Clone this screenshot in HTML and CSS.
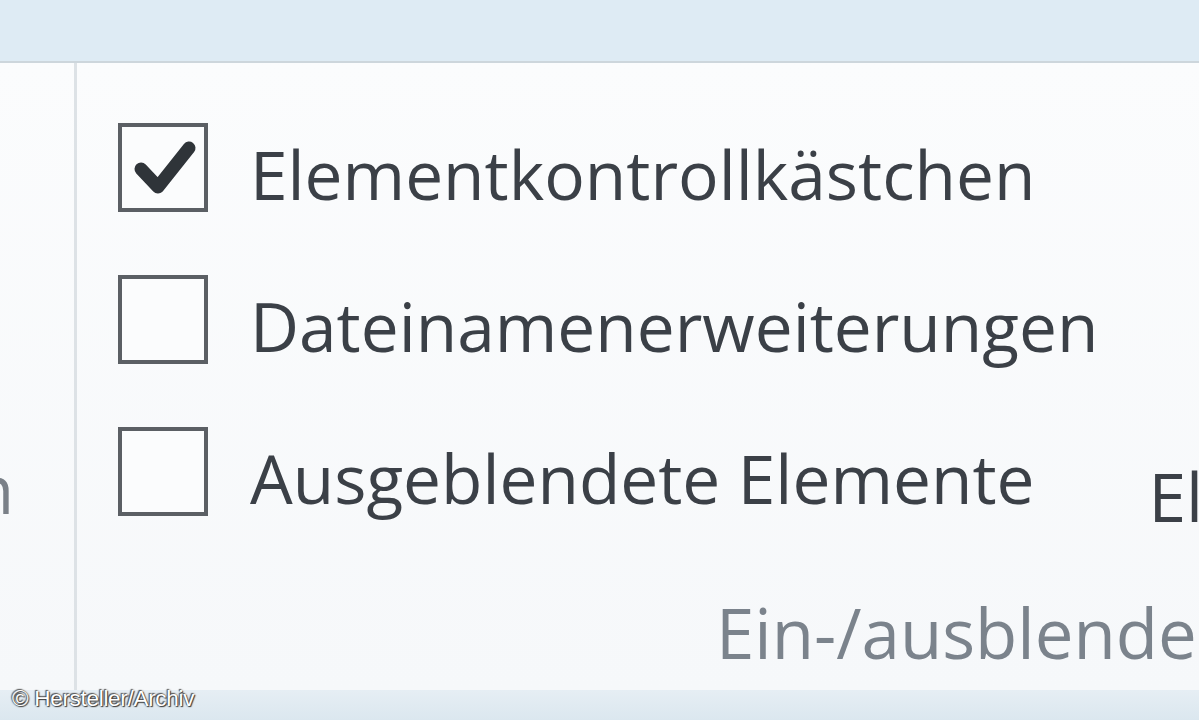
FILE: index.html
```html
<!DOCTYPE html>
<html lang="de">
<head>
    <meta charset="UTF-8">
    <title>Ansicht - Ein-/ausblenden</title>
    <link rel="stylesheet" href="styles.css">
</head>
<body>

    <div class="titlebar"></div>

    <div class="ribbon">
        <!-- vorherige Gruppe (abgeschnitten) -->
        <div class="group-prev">
            <span class="prev-item">Alle Spalten an Größe anpassen</span>
        </div>

        <div class="group-show">
            <div class="group-body">
                <ul class="check-list">
                    <li class="check-row">
                        <span class="checkbox">
                            <svg viewBox="0 0 82 81" width="82" height="81">
                                <path d="M19 42 L36 60 L67 21" fill="none" stroke="#2f3439" stroke-width="13" stroke-linecap="round" stroke-linejoin="round"/>
                            </svg>
                        </span>
                        <span class="check-label">Elementkontrollkästchen</span>
                    </li>
                    <li class="check-row">
                        <span class="checkbox"></span>
                        <span class="check-label">Dateinamenerweiterungen</span>
                    </li>
                    <li class="check-row">
                        <span class="checkbox"></span>
                        <span class="check-label">Ausgeblendete Elemente</span>
                    </li>
                </ul>
                <div class="big-button">
                    <span class="big-label">Elemente ausblenden</span>
                </div>
            </div>
            <div class="group-label">Ein-/ausblenden</div>
        </div>
    </div>

    <footer class="statusbar">
        <span class="credit">© Hersteller/Archiv</span>
    </footer>

</body>
</html>
```

FILE: styles.css
```css
body {
    margin: 0;
    width: 1199px;
    height: 720px;
    overflow: hidden;
    display: flex;
    flex-direction: column;
    background-color: #f8fafc;
    font-family: 'Open Sans', 'Noto Sans', sans-serif;
    color: #3b4047;
}
.titlebar {
    height: 61px;
    flex-shrink: 0;
    background-color: #deebf4;
    border-bottom: 2px solid #cdd6dc;
}
.ribbon {
    flex: 1;
    display: flex;
    background: linear-gradient(to bottom, #fbfcfd, #f6f8fa);
    overflow: hidden;
}
/* vorherige Gruppe */
.group-prev {
    width: 77px;
    flex-shrink: 0;
    border-right: 3px solid #dde2e6;
    overflow: hidden;
    display: flex;
    justify-content: flex-end;
    padding-top: 385px;
    box-sizing: border-box;
}
.prev-item {
    white-space: nowrap;
    font-size: 67px;
    line-height: 80px;
    height: 80px;
    color: #7a8088;
    margin-right: 60px;
}
/* Gruppe Ein-/ausblenden */
.group-show {
    flex: 1;
    display: flex;
    flex-direction: column;
    min-width: 0;
}
.group-body {
    flex: 1;
    display: flex;
}
.check-list {
    list-style: none;
    margin: 0;
    padding: 60px 0 0 41px;
    display: flex;
    flex-direction: column;
    gap: 63px;
}
.check-row {
    display: flex;
    align-items: center;
    gap: 42px;
    height: 89px;
    margin: 0;
}
.checkbox {
    width: 90px;
    height: 89px;
    flex-shrink: 0;
    box-sizing: border-box;
    border: 4px solid #5b5f64;
    background-color: #fbfcfd;
    display: flex;
}
.check-label {
    font-size: 67.6px;
    line-height: 80px;
    white-space: nowrap;
    padding-top: 12px;
}
.big-button {
    margin-left: 50px;
    padding-top: 393px;
    white-space: nowrap;
}
.big-label {
    font-size: 67.6px;
    line-height: 80px;
}
.group-label {
    height: 98px;
    padding-left: 639px;
    white-space: nowrap;
    font-size: 69px;
    line-height: 80px;
    color: #7b838c;
}
.statusbar {
    height: 30px;
    flex-shrink: 0;
    background: linear-gradient(to bottom, #e6eef4, #dbe7ef);
    display: flex;
    align-items: flex-end;
    padding: 0 0 10px 12px;
    box-sizing: border-box;
}
.credit {
    font-family: 'Liberation Sans', Arial, sans-serif;
    font-size: 22.5px;
    line-height: 22px;
    letter-spacing: -0.3px;
    color: #ffffff;
    text-shadow: 0 0 2px #3a3a3a, 1px 1px 1px #3a3a3a, -1px -1px 1px #5a5a5a;
}
```
